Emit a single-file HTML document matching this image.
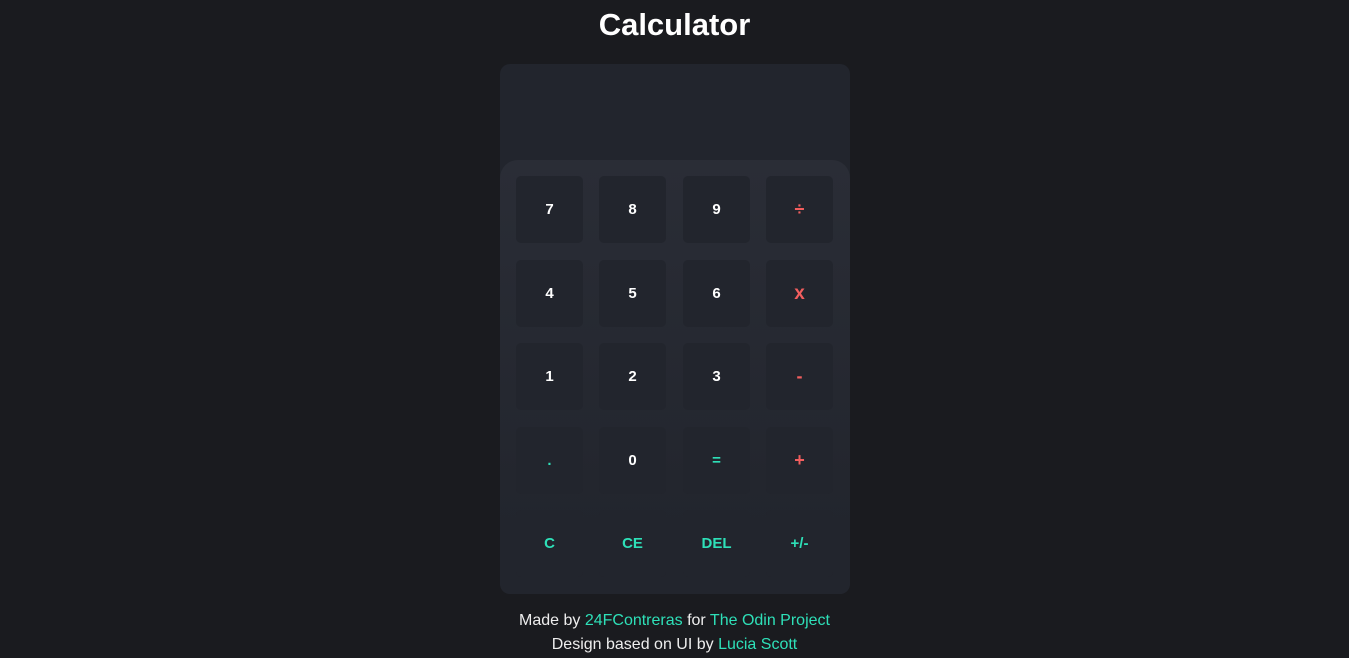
<!DOCTYPE html>
<html><head><style>
body{margin:0;background:#1a1b1f;width:1349px;height:658px;overflow:hidden;font-family:"Liberation Sans",sans-serif;color:#fff}
h1{position:absolute;top:6px;left:0;width:1349px;text-align:center;margin:0;font-size:31px;font-weight:bold;line-height:38px}
.calc{position:absolute;left:500px;top:64px;width:350px;height:530px;background:#22252d;border-radius:10px;overflow:hidden}
.pad{position:absolute;left:0;top:96px;width:350px;height:434px;border-radius:18px 18px 10px 10px;background:linear-gradient(#2a2d36,#22252d 85%)}
.b{position:absolute;width:67px;height:67px;background:#22252d;border-radius:5px;display:flex;align-items:center;justify-content:center;font-weight:bold;font-size:15px}
.r{color:#f25e5e}.g{color:#2ee0b8}
.f{position:absolute;left:0;width:1349px;text-align:center;font-size:16px;color:#eee}
.f span{color:#2ee0b8}
</style></head><body>
<h1>Calculator</h1>
<div class="calc"><div class="pad">
<div class="b" style="left:16px;top:16px">7</div><div class="b" style="left:99px;top:16px">8</div><div class="b" style="left:183px;top:16px">9</div><div class="b r" style="left:266px;top:16px;font-size:18px">÷</div>
<div class="b" style="left:16px;top:100px">4</div><div class="b" style="left:99px;top:100px">5</div><div class="b" style="left:183px;top:100px">6</div><div class="b r" style="left:266px;top:100px;font-size:19px">x</div>
<div class="b" style="left:16px;top:183px">1</div><div class="b" style="left:99px;top:183px">2</div><div class="b" style="left:183px;top:183px">3</div><div class="b r" style="left:266px;top:183px;font-size:18px">-</div>
<div class="b g" style="left:16px;top:267px">.</div><div class="b" style="left:99px;top:267px">0</div><div class="b g" style="left:183px;top:267px">=</div><div class="b r" style="left:266px;top:267px;font-size:18px">+</div>
<div class="b g" style="left:16px;top:350px">C</div><div class="b g" style="left:99px;top:350px">CE</div><div class="b g" style="left:183px;top:350px">DEL</div><div class="b g" style="left:266px;top:350px">+/-</div>
</div></div>
<div class="f" style="top:612px">Made by <span>24FContreras</span> for <span>The Odin Project</span></div>
<div class="f" style="top:636px">Design based on UI by <span>Lucia Scott</span></div>
</body></html>
